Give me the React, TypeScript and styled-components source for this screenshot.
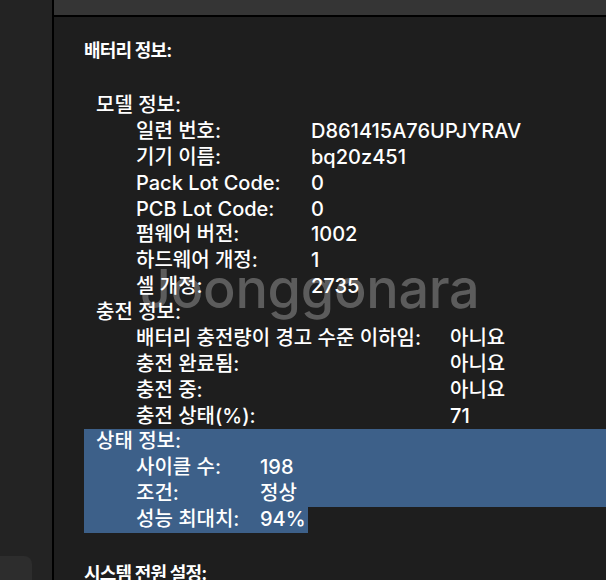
import React from 'react';
import styled, { createGlobalStyle } from 'styled-components';

const GlobalStyle = createGlobalStyle`
  html, body {
    margin: 0;
    padding: 0;
    background: #1e1e1e;
  }
  body {
    font-family: 'Inter', 'Noto Sans CJK KR', sans-serif;
    color: #ffffff;
  }
`;

const Window = styled.div`
  display: flex;
  width: 606px;
  height: 580px;
  overflow: hidden;
  background: #1e1e1e;
`;

const Sidebar = styled.div`
  width: 52px;
  flex-shrink: 0;
  background: #232323;
  border-right: 2px solid #000;
  display: flex;
  flex-direction: column;
  justify-content: flex-end;
`;

const SidebarButton = styled.div`
  width: 32px;
  height: 24px;
  background: #2d2d2d;
  border-top-right-radius: 8px;
`;

const Main = styled.div`
  flex: 1;
  display: flex;
  flex-direction: column;
  position: relative;
  min-width: 0;
`;

const TopBar = styled.div`
  height: 15px;
  flex-shrink: 0;
  background: #353535;
  border-bottom: 2px solid #000;
`;

const Watermark = styled.div`
  position: absolute;
  left: 86px;
  top: 262px;
  font-family: 'Inter', sans-serif;
  font-size: 54px;
  font-weight: 500;
  line-height: 1;
  color: #5c5c5c;
  letter-spacing: -0.3px;
  pointer-events: none;
  z-index: 0;
`;

const Content = styled.div`
  position: relative;
  z-index: 1;
  padding: 21px 0 0 30px;
  font-size: 20px;
  font-weight: 500;
  line-height: 25.87px;
`;

const SectionTitle = styled.div<{ $gap?: number }>`
  font-size: 18px;
  font-weight: 700;
  line-height: 26px;
  letter-spacing: -0.8px;
  margin-top: ${(p) => p.$gap ?? 0}px;
`;

const Sections = styled.div`
  margin-top: 29px;
`;

const GroupTitle = styled.div`
  padding-left: 12px;
  white-space: nowrap;
`;

const Row = styled.div<{ $label: number }>`
  display: grid;
  grid-template-columns: ${(p) => p.$label}px auto;
  padding-left: 52px;
  white-space: nowrap;
`;

const Selection = styled.div`
  background: #3d6089;
`;

const SelectionTail = styled(Row)`
  width: fit-content;
  padding-right: 2px;
  background: #3d6089;
`;

type Field = [string, string];

const model: Field[] = [
  ['일련 번호:', 'D861415A76UPJYRAV'],
  ['기기 이름:', 'bq20z451'],
  ['Pack Lot Code:', '0'],
  ['PCB Lot Code:', '0'],
  ['펌웨어 버전:', '1002'],
  ['하드웨어 개정:', '1'],
  ['셀 개정:', '2735'],
];

const charge: Field[] = [
  ['배터리 충전량이 경고 수준 이하임:', '아니요'],
  ['충전 완료됨:', '아니요'],
  ['충전 중:', '아니요'],
  ['충전 상태(%):', '71'],
];

const health: Field[] = [
  ['사이클 수:', '198'],
  ['조건:', '정상'],
];

const Fields = ({ items, label }: { items: Field[]; label: number }) => (
  <>
    {items.map(([k, v]) => (
      <Row key={k} $label={label}>
        <span>{k}</span>
        <span>{v}</span>
      </Row>
    ))}
  </>
);

export default function App() {
  return (
    <>
      <GlobalStyle />
      <Window>
        <Sidebar>
          <SidebarButton />
        </Sidebar>
        <Main>
          <TopBar />
          <Watermark>Joonggonara</Watermark>
          <Content>
            <SectionTitle>배터리 정보:</SectionTitle>
            <Sections>
              <GroupTitle>모델 정보:</GroupTitle>
              <Fields items={model} label={175} />
              <GroupTitle>충전 정보:</GroupTitle>
              <Fields items={charge} label={314} />
              <Selection>
                <GroupTitle>상태 정보:</GroupTitle>
                <Fields items={health} label={124} />
              </Selection>
              <SelectionTail $label={124}>
                <span>성능 최대치:</span>
                <span>94%</span>
              </SelectionTail>
            </Sections>
            <SectionTitle $gap={28}>시스템 전원 설정:</SectionTitle>
          </Content>
        </Main>
      </Window>
    </>
  );
}
